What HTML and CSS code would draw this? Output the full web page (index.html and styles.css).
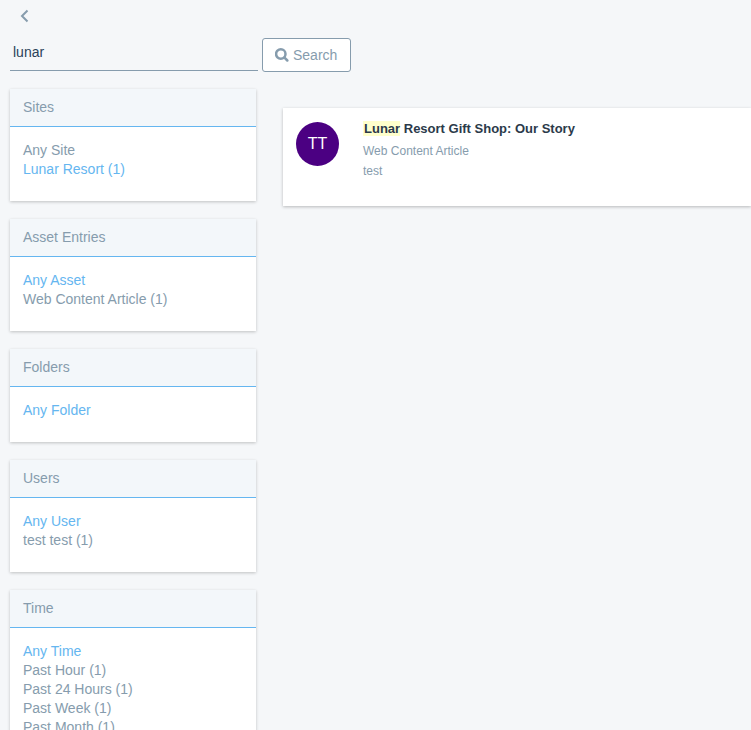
FILE: index.html
```html
<!DOCTYPE html>
<html lang="en">
<head>
<meta charset="utf-8">
<title>Search</title>
<link rel="stylesheet" href="styles.css">
</head>
<body>
<a class="back" href="#" aria-label="Back">
  <svg width="9" height="14" viewBox="0 0 9 14"><path d="M7.500 1.500 2 7l5.500 5.500"/></svg>
</a>
<form class="search">
  <input class="search-input" type="text" value="lunar" aria-label="Search terms">
  <button class="search-button" type="button">
    <svg width="14" height="14" viewBox="0 0 14 14"><circle cx="5.800" cy="6" r="4.700"/><path stroke-linecap="round" d="m9.500 9.700 2.800 2.800"/></svg>
    Search
  </button>
</form>
<div class="layout">
  <aside class="facets">
    <section class="panel">
      <h2>Sites</h2>
      <ul>
        <li><a href="#">Any Site</a></li>
        <li><a class="active" href="#">Lunar Resort (1)</a></li>
      </ul>
    </section>
    <section class="panel">
      <h2>Asset Entries</h2>
      <ul>
        <li><a class="active" href="#">Any Asset</a></li>
        <li><a href="#">Web Content Article (1)</a></li>
      </ul>
    </section>
    <section class="panel">
      <h2>Folders</h2>
      <ul>
        <li><a class="active" href="#">Any Folder</a></li>
      </ul>
    </section>
    <section class="panel">
      <h2>Users</h2>
      <ul>
        <li><a class="active" href="#">Any User</a></li>
        <li><a href="#">test test (1)</a></li>
      </ul>
    </section>
    <section class="panel">
      <h2>Time</h2>
      <ul>
        <li><a class="active" href="#">Any Time</a></li>
        <li><a href="#">Past Hour (1)</a></li>
        <li><a href="#">Past 24 Hours (1)</a></li>
        <li><a href="#">Past Week (1)</a></li>
        <li><a href="#">Past Month (1)</a></li>
      </ul>
    </section>
  </aside>
  <main class="results">
    <article class="result">
      <span class="avatar">TT</span>
      <div>
        <h3><a href="#"><mark>Lunar</mark> Resort Gift Shop: Our Story</a></h3>
        <p>Web Content Article</p>
        <p>test</p>
      </div>
    </article>
  </main>
</div>
</body>
</html>
```
FILE: styles.css
```css
* { box-sizing: border-box; }
body {
  margin: 0;
  padding: 9px 0 0 10px;
  background: #f5f7f9;
  color: #869cad;
  font: 14px/19px "Liberation Sans", Arial, sans-serif;
  overflow-x: hidden;
}
a { color: inherit; text-decoration: none; }
svg { fill: none; stroke: #869cad; flex: none; }
.back { display: block; width: 20px; height: 14px; padding-left: 10px; }
.back svg { display: block; stroke-width: 2; }

.search { display: flex; gap: 4px; margin-top: 12px; }
.search-input {
  width: 248px;
  height: 36px;
  padding: 0 3px 2px;
  border: 0;
  border-bottom: 1px solid #869cad;
  background: none;
  color: #2b4259;
  font: inherit;
  outline: 0;
}
.search-button {
  display: flex;
  align-items: center;
  gap: 4px;
  height: 34px;
  margin-top: 3px;
  padding: 0 13px 0 12px;
  border: 1px solid #869cad;
  border-radius: 3px;
  background: #fff;
  color: #869cad;
  font: inherit;
}
.search-button svg { stroke-width: 2.500; }

.layout { display: flex; gap: 27px; margin-top: 17px; }
.facets { flex: none; width: 246px; }
.panel {
  margin-bottom: 18px;
  background: #fff;
  box-shadow: 0 1px 3px rgba(0, 0, 0, 0.22);
}
.panel h2 {
  margin: 0;
  padding: 9px 13px;
  border-bottom: 1px solid #65b6f0;
  background: #f3f7fa;
  font-size: 14px;
  font-weight: 400;
}
.panel ul { margin: 0; padding: 14px 13px 22px; list-style: none; }
.panel .active { color: #65b6f0; }

.results { flex: 1; padding-top: 19px; }
.result {
  display: flex;
  gap: 24px;
  min-height: 98px;
  padding: 11px 13px;
  background: #fff;
  box-shadow: 0 1px 3px rgba(0, 0, 0, 0.25);
}
.avatar {
  flex: none;
  width: 43px;
  height: 44px;
  margin-top: 3px;
  border-radius: 50%;
  background: #4b0082;
  color: #fff;
  font-size: 16px;
  line-height: 44px;
  text-align: center;
}
.result h3 { margin: 0 0 3px; color: #2b3a4a; font-size: 13px; line-height: 19px; }
.result p { margin: 0; font-size: 12px; line-height: 20px; }
mark { padding: 0 0 0 1px; background: #ffffcc; color: inherit; }
```
